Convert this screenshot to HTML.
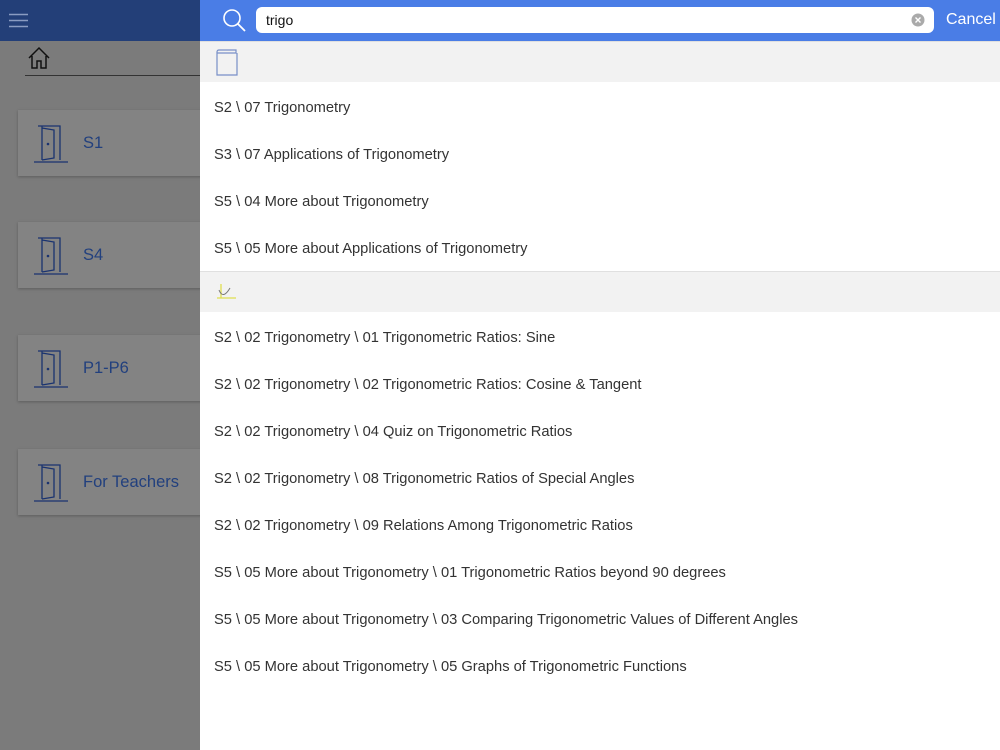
<!DOCTYPE html>
<html><head><style>
*{margin:0;padding:0;box-sizing:border-box}
body{width:1000px;height:750px;overflow:hidden;font-family:"Liberation Sans",sans-serif;background:#7b7b7b;position:relative}
.lh{position:absolute;left:0;top:0;width:200px;height:41px;background:#233f78}
.card{position:absolute;left:18px;width:190px;height:66px;background:#838383;box-shadow:0 1px 3px rgba(0,0,0,.25)}
.card span{position:absolute;left:65px;top:24px;font-size:16.5px;color:#22407e}
.card svg{position:absolute;left:14px;top:14px}
.right{position:absolute;left:200px;top:0;width:800px;height:750px;background:#fff}
.rh{height:41px;background:#4a7de6;position:relative}
.search{position:absolute;left:56px;top:7px;width:678px;height:26px;background:#fff;border-radius:6px;font-size:14px;padding:5px 10px;color:#111}
.cancel{position:absolute;left:746px;top:11px;font-size:16px;color:#fff}
.sec{height:41px;background:#f2f2f2;border-top:1px solid #e0e0e0;position:relative}
.item{height:47px;line-height:53px;padding-left:14px;font-size:14.7px;color:#333;overflow:visible}
</style></head><body>
<div class="lh"><svg width="20" height="16" style="position:absolute;left:9px;top:13px"><path d="M0 1.5H19M0 7.5H19M0 13.5H19" stroke="#8a9cc2" stroke-width="1.6"/></svg></div>
<svg width="26" height="24" style="position:absolute;left:27px;top:46px"><path d="M2 12L12 2L22 12M5 10V22H10V15H14V22H19V10" fill="none" stroke="#111" stroke-width="1.5"/></svg>
<div style="position:absolute;left:25px;top:75px;width:175px;height:1px;background:#333"></div>
<div class="card" style="top:110px"><svg width="38" height="40"><path d="M6 2H28V36M10 2V36M10 4L22 6V34L10 36M2 38H36" fill="none" stroke="#1a3370" stroke-width="1.3"/><circle cx="16" cy="20" r="1.3" fill="#1a3370"/></svg><span>S1</span></div>
<div class="card" style="top:222px"><svg width="38" height="40"><path d="M6 2H28V36M10 2V36M10 4L22 6V34L10 36M2 38H36" fill="none" stroke="#1a3370" stroke-width="1.3"/><circle cx="16" cy="20" r="1.3" fill="#1a3370"/></svg><span>S4</span></div>
<div class="card" style="top:335px"><svg width="38" height="40"><path d="M6 2H28V36M10 2V36M10 4L22 6V34L10 36M2 38H36" fill="none" stroke="#1a3370" stroke-width="1.3"/><circle cx="16" cy="20" r="1.3" fill="#1a3370"/></svg><span>P1-P6</span></div>
<div class="card" style="top:449px"><svg width="38" height="40"><path d="M6 2H28V36M10 2V36M10 4L22 6V34L10 36M2 38H36" fill="none" stroke="#1a3370" stroke-width="1.3"/><circle cx="16" cy="20" r="1.3" fill="#1a3370"/></svg><span>For Teachers</span></div>
<div class="right">
<div class="rh">
<svg width="26" height="26" style="position:absolute;left:22px;top:8px"><circle cx="10" cy="10" r="8" fill="none" stroke="#fff" stroke-width="1.6"/><path d="M16 16L23 23" stroke="#fff" stroke-width="1.8"/></svg>
<div class="search">trigo<svg width="14" height="14" style="position:absolute;right:9px;top:6px"><circle cx="7" cy="7" r="6.5" fill="#aaa"/><path d="M4.5 4.5L9.5 9.5M9.5 4.5L4.5 9.5" stroke="#fff" stroke-width="1.4"/></svg></div>
<div class="cancel">Cancel</div>
</div>
<div class="sec"><svg width="24" height="30" style="position:absolute;left:15px;top:6px"><path d="M2 4Q2 2 4 2H21V5H2M2 4V27H22V5" fill="none" stroke="#7890c8" stroke-width="1.2"/></svg></div>
<div class="item">S2 \ 07 Trigonometry</div>
<div class="item">S3 \ 07 Applications of Trigonometry</div>
<div class="item">S5 \ 04 More about Trigonometry</div>
<div class="item">S5 \ 05 More about Applications of Trigonometry</div>
<div class="sec" style="margin-top:1px"><svg width="24" height="20" style="position:absolute;left:16px;top:10px"><path d="M5 2V16M1 16H20" stroke="#e0de50" stroke-width="1.3"/><path d="M3 8Q7 18 14 6" fill="none" stroke="#777" stroke-width="1"/></svg></div>
<div class="item">S2 \ 02 Trigonometry \ 01 Trigonometric Ratios: Sine</div>
<div class="item">S2 \ 02 Trigonometry \ 02 Trigonometric Ratios: Cosine &amp; Tangent</div>
<div class="item">S2 \ 02 Trigonometry \ 04 Quiz on Trigonometric Ratios</div>
<div class="item">S2 \ 02 Trigonometry \ 08 Trigonometric Ratios of Special Angles</div>
<div class="item">S2 \ 02 Trigonometry \ 09 Relations Among Trigonometric Ratios</div>
<div class="item">S5 \ 05 More about Trigonometry \ 01 Trigonometric Ratios beyond 90 degrees</div>
<div class="item">S5 \ 05 More about Trigonometry \ 03 Comparing Trigonometric Values of Different Angles</div>
<div class="item">S5 \ 05 More about Trigonometry \ 05 Graphs of Trigonometric Functions</div>
</div>
</body></html>
